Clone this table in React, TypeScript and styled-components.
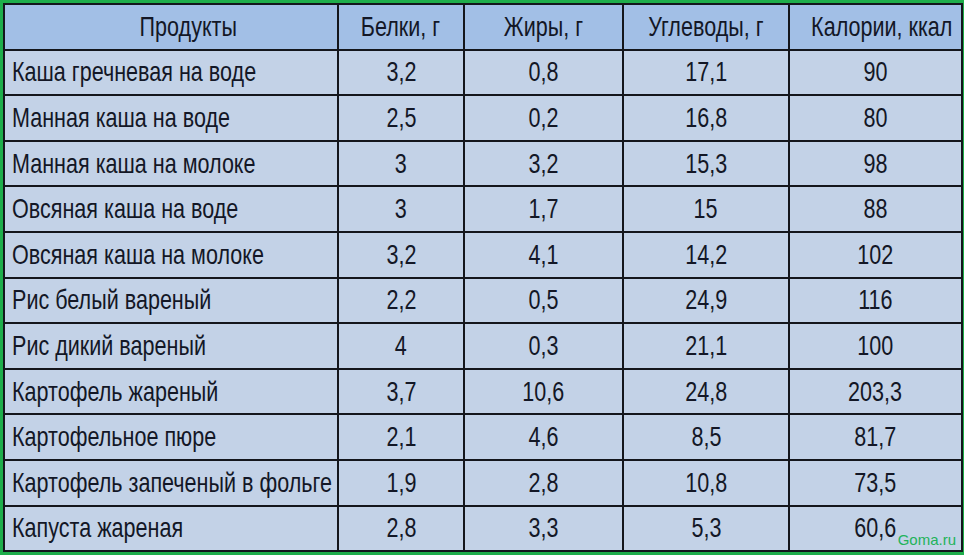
import styled, { createGlobalStyle } from "styled-components";

const GlobalStyle = createGlobalStyle`
  html, body {
    margin: 0;
    padding: 0;
    background: #1fae4b;
  }
`;

type Row = [string, string, string, string, string];

const head: Row = ["Продукты", "Белки, г", "Жиры, г", "Углеводы, г", "Калории, ккал"];

const rows: Row[] = [
  ["Каша гречневая на воде", "3,2", "0,8", "17,1", "90"],
  ["Манная каша на воде", "2,5", "0,2", "16,8", "80"],
  ["Манная каша на молоке", "3", "3,2", "15,3", "98"],
  ["Овсяная каша на воде", "3", "1,7", "15", "88"],
  ["Овсяная каша на молоке", "3,2", "4,1", "14,2", "102"],
  ["Рис белый вареный", "2,2", "0,5", "24,9", "116"],
  ["Рис дикий вареный", "4", "0,3", "21,1", "100"],
  ["Картофель жареный", "3,7", "10,6", "24,8", "203,3"],
  ["Картофельное пюре", "2,1", "4,6", "8,5", "81,7"],
  ["Картофель запеченый в фольге", "1,9", "2,8", "10,8", "73,5"],
  ["Капуста жареная", "2,8", "3,3", "5,3", "60,6"],
];

const widths = [334, 126, 159, 166, 173];

const Frame = styled.div`
  position: relative;
  box-sizing: border-box;
  width: 964px;
  height: 555px;
  border: 3px solid #1fae4b;
  border-bottom-width: 4px;
  background: #1fae4b;
`;

const Table = styled.table`
  width: 958px;
  height: 548px;
  border-collapse: collapse;
  table-layout: fixed;
  border: 2px solid #14161c;
  font-family: "Liberation Sans", Arial, sans-serif;
  color: #131726;
`;

const Line = styled.tr`
  height: 45.6px;
`;

const HeadCell = styled.th<{ $first?: boolean }>`
  background: #a2bfe6;
  border: 2px solid #14161c;
  font-weight: normal;
  font-size: 28px;
  text-align: center;
  padding: 0 0 0 ${({ $first }) => ($first ? "34px" : "0")};
  white-space: nowrap;
  overflow: visible;
`;

const Cell = styled.td<{ $first?: boolean }>`
  background: #c3d2e7;
  border: 2px solid #14161c;
  font-size: 28px;
  text-align: ${({ $first }) => ($first ? "left" : "center")};
  padding: 0 0 0 ${({ $first }) => ($first ? "7px" : "0")};
  white-space: nowrap;
  overflow: visible;
`;

// the source text is a condensed face; squeeze Liberation Sans to match
const Narrow = styled.span<{ $left?: boolean }>`
  display: inline-block;
  transform: scaleX(0.77);
  transform-origin: ${({ $left }) => ($left ? "left center" : "center center")};
`;

const Watermark = styled.span`
  position: absolute;
  right: 5px;
  bottom: 3px;
  font-family: "Liberation Sans", Arial, sans-serif;
  font-size: 15px;
  color: #22b25a;
`;

export default function App() {
  return (
    <>
      <GlobalStyle />
      <Frame>
        <Table>
          <colgroup>
            {widths.map((w, i) => (
              <col key={i} style={{ width: w }} />
            ))}
          </colgroup>
          <thead>
            <Line>
              {head.map((h, i) => (
                <HeadCell key={h} $first={i === 0}>
                  <Narrow>{h}</Narrow>
                </HeadCell>
              ))}
            </Line>
          </thead>
          <tbody>
            {rows.map((r) => (
              <Line key={r[0]}>
                {r.map((v, i) => (
                  <Cell key={i} $first={i === 0}>
                    <Narrow $left={i === 0}>{v}</Narrow>
                  </Cell>
                ))}
              </Line>
            ))}
          </tbody>
        </Table>
        <Watermark>Goma.ru</Watermark>
      </Frame>
    </>
  );
}
